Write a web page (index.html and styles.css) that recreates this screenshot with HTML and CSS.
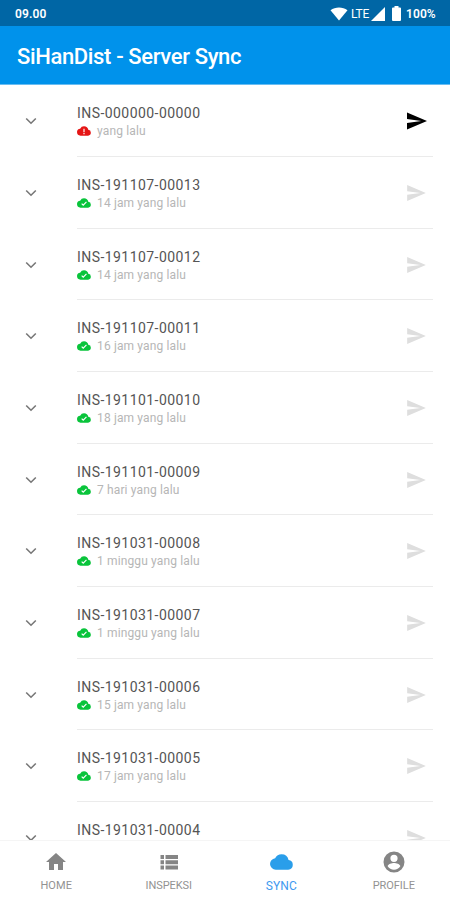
FILE: index.html
```
<!DOCTYPE html>
<html lang="id">
<head>
<meta charset="utf-8">
<title>SiHanDist - Server Sync</title>
<link rel="stylesheet" href="styles.css">
</head>
<body>
<svg class="defs" width="0" height="0">
<symbol id="chevron" viewBox="0 0 12 8"><path d="M1.200 1.500 6 6.200l4.800-4.700" fill="none" stroke="currentColor" stroke-width="1.600"/></symbol>
<symbol id="send" viewBox="2 3 21 18"><path d="M2.010 21 23 12 2.010 3 2 10l15 2-15 2z"/></symbol>
<symbol id="done" viewBox="0 4 24 16"><path d="M19.350 10.040A7.490 7.490 0 0 0 12 4a7.500 7.500 0 0 0-6.650 4.040A6 6 0 0 0 6 20h13a5 5 0 0 0 .35-9.960z"/><path d="m8 13 2.700 2.700 5.500-5.500" fill="none" stroke="#fff" stroke-width="2"/></symbol>
<symbol id="alert" viewBox="0 4 24 16"><path d="M19.350 10.040A7.490 7.490 0 0 0 12 4a7.500 7.500 0 0 0-6.650 4.040A6 6 0 0 0 6 20h13a5 5 0 0 0 .35-9.960z"/><path d="M12 8v6m0 1.500v2" fill="none" stroke="#fff" stroke-width="2"/></symbol>
</svg>
<div class="app">
<div class="status"><span class="time">09.00</span>
<svg class="wifi" viewBox="0 0 18 14"><path d="M9 13.500.5 3.200C5.300-.4 12.700-.4 17.500 3.200z"/></svg>
<span class="lte">LTE</span>
<svg class="signal" viewBox="0 0 14 14"><path d="M14 0v14H0z"/></svg>
<svg class="battery" viewBox="0 0 9 15"><path d="M2.500 0h4v1.500H8q1 0 1 1V14q0 1-1 1H1q-1 0-1-1V2.500q0-1 1-1h1.500z"/></svg>
<span class="percent">100%</span></div>
<header><h1>SiHanDist - Server Sync</h1></header>
<main id="list"></main>
<nav>
<div class="tab"><svg viewBox="0 0 24 24"><path d="M10 20v-6h4v6h5v-8h3L12 3 2 12h3v8z"/></svg><span class="home">HOME</span></div>
<div class="tab"><svg viewBox="0 0 24 24"><path d="M3.500 5h3.500v4H3.500zm5 0H21v4H8.500zM3.500 10.300h3.500v4H3.500zm5 0H21v4H8.500zM3.500 15.600h3.500v4H3.500zm5 0H21v4H8.500z"/></svg><span class="inspeksi">INSPEKSI</span></div>
<div class="tab active"><svg viewBox="0 0 24 24"><path d="M19.350 10.040A7.490 7.490 0 0 0 12 4a7.500 7.500 0 0 0-6.650 4.040A6 6 0 0 0 6 20h13a5 5 0 0 0 .35-9.960z"/></svg><span class="sync">SYNC</span></div>
<div class="tab"><svg viewBox="0 0 24 24"><path d="M12 1.500a10.500 10.500 0 1 0 0 21 10.500 10.500 0 0 0 0-21zm0 3.200a3.600 3.600 0 1 1 0 7.200 3.600 3.600 0 0 1 0-7.200zm0 15a7.500 7.500 0 0 1-6.300-3.400c0-2.100 4.200-3.300 6.300-3.300s6.300 1.200 6.300 3.300a7.500 7.500 0 0 1-6.300 3.400z"/></svg><span class="profile">PROFILE</span></div>
</nav>
</div>
<script src="script.js"></script>
</body>
</html>
```
FILE: styles.css
```
* { box-sizing: border-box; }
body { margin: 0; background: #fff; font-family: Roboto, "Liberation Sans", sans-serif; }
svg { display: block; fill: currentColor; flex: none; }
.defs { position: absolute; }
.app { width: 450px; height: 900px; display: flex; flex-direction: column; overflow: hidden; }
.status { height: 26px; flex: none; background: #0066a5; color: #fff; display: flex; align-items: center; padding: 1px 14px 0 15px; font-size: 12px; font-weight: 600; }
.time { margin-right: auto; letter-spacing: .1px; }
.wifi { width: 18px; height: 14px; }
.lte { margin-left: 3px; font-size: 12px; font-weight: 400; letter-spacing: -.3px; width: 19px; }
.signal { width: 14px; height: 14px; margin-left: 1px; }
.battery { width: 9px; height: 15px; margin: 0 5px 0 7px; }
.percent { width: 30px; letter-spacing: .1px; white-space: nowrap; }
header { height: 59.3px; flex: none; background: #0092eb; color: #fff; display: flex; align-items: center; padding: 4px 17px 0; border-bottom: 1px solid #69bdf2; }
h1 { margin: 0; font-size: 22px; line-height: 28px; font-weight: 500; letter-spacing: -.36px; }
main { flex: 1; min-height: 0; overflow: hidden; }
.row { height: 71.67px; display: flex; padding-right: 17px; }
.toggle { width: 77px; padding: 32px 0 0 25px; color: #777; }
.toggle svg { width: 12px; height: 8px; }
.content { flex: 1; display: flex; justify-content: space-between; border-bottom: 1px solid #ebebeb; }
.code { padding-top: 19px; font-size: 14px; line-height: 18px; font-weight: 400; letter-spacing: .44px; color: #555; white-space: nowrap; }
.meta { display: flex; align-items: center; gap: 6px; height: 18px; font-size: 12px; line-height: 18px; font-weight: 400; letter-spacing: .14px; color: #b6b6b6; }
.meta svg { width: 14px; height: 10px; color: #09c43b; }
.meta .failed { color: #e51616; }
.send { width: 19px; height: 16px; margin: 28px 7px 0 0; color: #dedede; }
.send.ready { width: 20px; height: 18px; margin: 27px 6px 0 0; color: #000; }
nav { height: 60px; flex: none; display: flex; background: #fff; border-top: 1px solid #f5f5f5; }
.tab { flex: 1; display: flex; flex-direction: column; align-items: center; padding-top: 9px; color: #858585; }
.tab svg { width: 24px; height: 24px; }
.tab span { margin-top: 5px; font-size: 11px; line-height: 14px; color: #929292; letter-spacing: .1px; }
.tab .inspeksi { letter-spacing: -.05px; }
.tab .profile { letter-spacing: -.05px; }
.tab.active svg { color: #2a9eea; width: 23px; }
.tab.active span { color: #3e9af0; font-size: 12px; }
```
FILE: script.js
```
const records = [
  ["INS-000000-00000", "yang lalu"],
  ["INS-191107-00013", "14 jam yang lalu"],
  ["INS-191107-00012", "14 jam yang lalu"],
  ["INS-191107-00011", "16 jam yang lalu"],
  ["INS-191101-00010", "18 jam yang lalu"],
  ["INS-191101-00009", "7 hari yang lalu"],
  ["INS-191031-00008", "1 minggu yang lalu"],
  ["INS-191031-00007", "1 minggu yang lalu"],
  ["INS-191031-00006", "15 jam yang lalu"],
  ["INS-191031-00005", "17 jam yang lalu"],
  ["INS-191031-00004", ""]
];
document.getElementById("list").innerHTML = records.map(([code, age], i) => `
<div class="row"><div class="toggle"><svg><use href="#chevron"/></svg></div>
<div class="content"><div class="code">${code}<div class="meta"><svg class="${i ? "" : "failed"}"><use href="#${i ? "done" : "alert"}"/></svg><span>${age}</span></div></div>
<svg class="send ${i ? "" : "ready"}"><use href="#send"/></svg></div></div>`).join("");
```
